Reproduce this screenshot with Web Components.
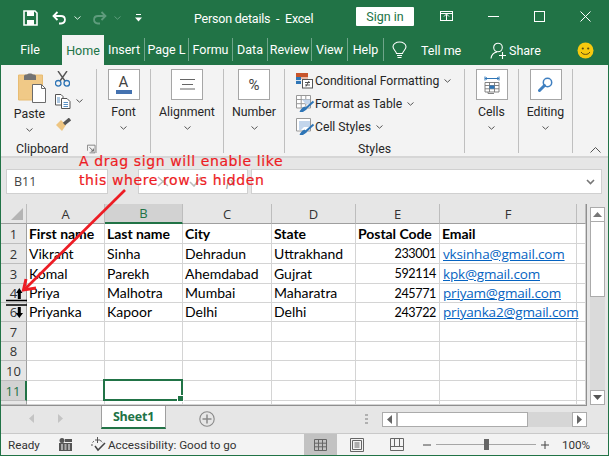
<!DOCTYPE html>
<html><head><meta charset="utf-8"><style>
html,body{margin:0;padding:0;background:#fff}
body{width:609px;height:456px;overflow:hidden;font-family:Roboto,"Open Sans",sans-serif}
</style></head><body>
<xl-window>
<xl-titlebar></xl-titlebar>
<xl-tabs></xl-tabs>
<xl-ribbon></xl-ribbon>
<xl-formula></xl-formula>
<xl-sheet></xl-sheet>
<xl-sheettabs></xl-sheettabs>
<xl-status></xl-status>
<xl-note>A drag sign will enable like<br>this where row is hidden</xl-note>
</xl-window>
<script>
function def(name,css,html){
  customElements.define(name,class extends HTMLElement{
    constructor(){super();const r=this.attachShadow({mode:'open'});
      r.innerHTML='<style>'+css+'</style>'+(typeof html==='function'?html(this):html);}
  });
}
const chev=(c='#555')=>`<svg width="7" height="4" viewBox="0 0 7 4" style="display:block"><path d="M.5.5 3.5 3.2 6.5.5" fill="none" stroke="${c}" stroke-width="1"/></svg>`;
def('xl-window',`:host{display:flex;flex-direction:column;position:relative;width:609px;height:456px;box-sizing:border-box;border-left:1px solid #217346;border-right:1px solid #217346;border-bottom:1px solid #217346;background:#e6e6e6;font-family:Roboto,"Open Sans",sans-serif;overflow:hidden}`,`<slot></slot>`);

def('xl-titlebar',`:host{display:flex;align-items:center;height:35px;margin:0 -1px;background:#217346;color:#fff;font-size:12.5px;position:relative;flex:none}
.qat{display:flex;align-items:center;width:194px;padding-left:23px;box-sizing:border-box;gap:0}
.title{width:162px;padding-top:1px;letter-spacing:-.22px;white-space:pre}
.sign{width:58px;height:19px;background:#fff;color:#217346;border-radius:1px;font-size:12.5px;display:flex;align-items:center;justify-content:center;margin-top:-2px}
.win{display:flex;align-items:center;margin-left:26px;margin-top:-3px}
svg{display:block;flex:none}`,
`<div class="qat">
<svg width="15" height="16" viewBox="0 0 15 16"><path d="M1 1H12L14 3V15H1Z" fill="none" stroke="#fff" stroke-width="1.6"/><rect x="4" y="1" width="7" height="5" fill="#fff"/><rect x="4" y="10" width="7" height="5" fill="#fff"/></svg>
<svg style="margin-left:14px" width="15" height="14" viewBox="0 0 15 14"><path d="M5.5 1 1.5 5 5.5 9" fill="none" stroke="#fff" stroke-width="1.8"/><path d="M2 5H9C14 5 14.500 12 9 12.500H7" fill="none" stroke="#fff" stroke-width="1.8"/></svg>
<span style="margin-left:7px">${chev('#dfeee6')}</span>
<svg style="margin-left:11px" width="15" height="14" viewBox="0 0 15 14"><path d="M9.500 1 13.500 5 9.500 9" fill="none" stroke="#5f9c7d" stroke-width="1.800"/><path d="M13 5H6C1 5 .5 12 6 12.500H8" fill="none" stroke="#5f9c7d" stroke-width="1.800"/></svg>
<span style="margin-left:7px">${chev('#5f9c7d')}</span>
<svg style="margin-left:14px" width="7" height="8" viewBox="0 0 7 8"><path d="M1 .5H6" stroke="#fff"/><path d="M0 3.500H7L3.500 7.500Z" fill="#fff"/></svg>
</div>
<div class="title">Person details  -  Excel</div>
<div class="sign">Sign in</div>
<div class="win">
<svg width="14" height="11" viewBox="0 0 14 11"><rect x=".5" y=".5" width="12" height="9" fill="none" stroke="#fff"/><path d="M6.500 9V3.500M4 5.500 6.500 3 9 5.500M.5 2.500H12.500" fill="none" stroke="#fff"/></svg>
<svg style="margin-left:34px" width="11" height="11" viewBox="0 0 11 11"><path d="M0 5.500H11" stroke="#fff"/></svg>
<svg style="margin-left:35px" width="11" height="11" viewBox="0 0 11 11"><rect x=".5" y=".5" width="10" height="10" fill="none" stroke="#fff"/></svg>
<svg style="margin-left:35px" width="11" height="11" viewBox="0 0 11 11"><path d="M.5.5 10.500 10.500M10.500.5 .5 10.500" stroke="#fff"/></svg>
</div>`);

def('xl-tabs',`:host{display:flex;align-items:center;height:30px;margin:0 -1px;background:#217346;color:#fff;font-size:12.5px;flex:none}
.t{height:23px;display:flex;align-items:center;justify-content:center;box-sizing:border-box;border-right:1px solid #6fa58a;overflow:hidden;white-space:nowrap;margin-top:-1px}
.f{width:62px;justify-content:center;border:0;padding-right:2px}
.h{width:42px;height:30px;background:#f3f3f3;color:#217346;border:0;margin-top:0}
.end{display:flex;align-items:center}
.end span{display:block;white-space:nowrap}
svg{display:block;flex:none}`,
`<div class="t f">File</div><div class="t h">Home</div>
<div class="t" style="width:41px">Insert</div><div class="t" style="width:44px">Page L</div><div class="t" style="width:44px">Formu</div><div class="t" style="width:35px">Data</div><div class="t" style="width:44px">Review</div><div class="t" style="width:36px">View</div><div class="t" style="width:36px">Help</div>
<div class="end">
<svg style="margin-left:8px" width="15" height="18" viewBox="0 0 15 18"><path d="M4.500 12.500C4 10 1 8.500 1 5.800 1 3 4 1 7.500 1S14 3 14 5.800C14 8.500 11 10 10.500 12.500Z" fill="none" stroke="#fff" stroke-width="1.100"/><path d="M5 14.500H10M5.500 16.500H9.500" stroke="#fff"/></svg>
<span style="margin-left:14px;width:38px">Tell me</span>
<svg style="margin-left:31px" width="17" height="17" viewBox="0 0 17 17"><circle cx="8" cy="5.500" r="4.300" fill="none" stroke="#fff" stroke-width="1.100"/><path d="M1 16.500C1.500 12.500 4 10.500 7 10" fill="none" stroke="#fff" stroke-width="1.100"/><path d="M9 13.500H16M12.500 10V17" stroke="#fff" stroke-width="1.100"/></svg>
<span style="margin-left:2px;width:29px">Share</span>
<svg style="margin-left:39px" width="17" height="17" viewBox="0 0 17 17"><circle cx="8.500" cy="8.500" r="8" fill="#f6c90e"/><circle cx="5.800" cy="6.500" r="1.100" fill="#5b4a10"/><circle cx="11.200" cy="6.500" r="1.100" fill="#5b4a10"/><path d="M4.200 10C5.200 13.200 11.800 13.200 12.800 10" fill="none" stroke="#5b4a10" stroke-width="1"/></svg>
</div>`);

def('xl-btn',`:host{display:flex;flex-direction:column;align-items:center;box-sizing:border-box;height:84px;border-right:1px solid #bfbfbf;margin-top:4px;color:#262626;font-size:12.3px;flex:none}
.b{width:32px;height:31px;box-sizing:border-box;border:1px solid #a6a6a6;background:#fff;display:flex;align-items:center;justify-content:center;flex:none}
.l{margin-top:4px;line-height:16px;height:16px}
.c{margin-top:6px}`,el=>`<div class="b"><slot></slot></div><div class="l">${el.getAttribute('label')}</div><div class="c">${chev()}</div>`);

def('xl-style-row',`:host{display:flex;align-items:center;height:23px;font-size:12.2px;color:#262626;white-space:nowrap}
.i{width:18px;height:17px;flex:none;margin-right:1px}
.c{margin-left:5px}`,el=>`<div class="i"><slot></slot></div><span>${el.getAttribute('text')}</span><span class="c">${chev()}</span>`);

const brush=`<path d="M17.500 6.500 8 15" stroke="#2e75b6" stroke-width="2"/><path d="M8.500 11.500 11 14 7 17H3.500C4 15 6 12.500 8.500 11.500Z" fill="#2e75b6"/>`;
def('xl-ribbon',`:host{display:flex;height:93px;box-sizing:border-box;background:#f3f3f3;border-bottom:2px solid #d6d6d6;flex:none;font-family:Roboto,"Open Sans",sans-serif}
svg{display:block}
.clip{width:96px;height:84px;margin-top:4px;border-right:1px solid #bfbfbf;box-sizing:border-box;flex:none;display:grid;grid-template-columns:53px 1fr;grid-template-rows:71px 13px;color:#262626;font-size:12.3px}
.p{display:flex;flex-direction:column;align-items:center;padding-left:4px;box-sizing:border-box}
.p span{line-height:16px}
.s{display:flex;flex-direction:column;padding-left:1px}
.s div{display:flex;align-items:center;height:24px;flex:none}
.s div:first-child{height:20px}
.cl{grid-column:1/3;display:flex;align-items:center;height:18px;padding-left:15px}
.cl svg{margin-left:19px}
.st{width:180px;height:84px;margin-top:4px;border-right:1px solid #bfbfbf;box-sizing:border-box;padding-left:11px;flex:none;display:flex;flex-direction:column}
.st .cap{font-size:12.3px;color:#262626;text-align:center;margin-top:2px;height:18px;line-height:18px;padding-right:11px;flex:none}
.col{flex:1;display:flex;align-items:flex-end;justify-content:flex-end;padding:0 7px 3px 0}
.fa{display:flex;flex-direction:column;align-items:center;width:16px;color:#444;font-size:15px;line-height:14px}
.fa i{display:block;width:16px;height:4px;background:#4472b0;margin-top:1px}`,
`<div class="clip">
 <div class="p"><svg width="28" height="30" viewBox="0 0 28 30" style="margin:4px 0 0 4px"><path d="M.5 2H24.500V27H.5Z" fill="#f0c987" stroke="#e8bc73"/><path d="M6 3C6 1.500 8 1.500 9 1.500 9.500 0 14.500 0 15 1.500 16 1.500 18 1.500 18 3V7H6Z" fill="#737373"/><path d="M14.500 11.500H23.500L27.500 15.500V29.500H14.500Z" fill="#fff" stroke="#6b6b6b"/><path d="M23.500 11.500V15.500H27.500" fill="none" stroke="#6b6b6b"/></svg><span style="margin-top:3px">Paste</span><span style="margin-top:6px">${chev()}</span></div>
 <div class="s">
  <div><svg width="15" height="16" viewBox="0 0 15 16"><path d="M3 0 10 10M12 0 5 10" stroke="#555" stroke-width="1.400"/><circle cx="3.200" cy="12.300" r="2.800" fill="none" stroke="#2e75b6" stroke-width="1.300"/><circle cx="11.800" cy="12.300" r="2.800" fill="none" stroke="#2e75b6" stroke-width="1.300"/></svg></div>
  <div><svg width="16" height="15" viewBox="0 0 16 15"><path d="M.5.5H6L8 2.500V11H.5Z" fill="#fff" stroke="#555"/><path d="M6.500 4.500H12L15 7.500V14.500H6.500Z" fill="#fff" stroke="#555"/><path d="M8.500 8.500H13M8.500 10.500H13M8.500 12.500H13M2 4H5M2 6H5M2 8H5" stroke="#2e75b6" stroke-width=".8"/></svg><span style="margin-left:5px">${chev()}</span></div>
  <div><svg width="16" height="15" viewBox="0 0 16 15"><path d="M1 7 6 2 11 7 7 13Z" fill="#eec581"/><path d="M9 6 15 1" stroke="#555" stroke-width="3.500"/></svg></div>
 </div>
 <div class="cl">Clipboard<svg width="10" height="10" viewBox="0 0 10 10"><path d="M.5 7V.5H9.500V9.500H3" fill="none" stroke="#777"/><path d="M3 3 7.500 7.500M7.500 4.500V7.500H4.500" fill="none" stroke="#555"/></svg></div>
</div>
<xl-btn label="Font" style="width:54px"><div class="fa">A<i></i></div></xl-btn>
<xl-btn label="Alignment" style="width:73px"><svg width="15" height="11" viewBox="0 0 15 11"><path d="M0 .5H15M2 5.500H13M0 10H15" stroke="#666"/></svg></xl-btn>
<xl-btn label="Number" style="width:61px"><span style="font-size:15px;color:#444">%</span></xl-btn>
<div class="st"><div>
<xl-style-row text="Conditional Formatting"><svg width="18" height="17" viewBox="0 0 18 17"><path d="M0 1H12V5H0Z" fill="#c8552b"/><path d="M0 5H5V12H0Z" fill="#2e75b6"/><path d="M0 8.500H5" stroke="#fff" stroke-width=".8"/><path d="M5 5H12V7H5Z" fill="#e8b9a5"/><rect x="6.500" y="7.500" width="10" height="8.500" fill="#fff" stroke="#555"/><path d="M9 10.500H14M9 13H14M13 9 10 14.500" stroke="#444" stroke-width=".9" fill="none"/></svg></xl-style-row>
<xl-style-row text="Format as Table"><svg width="18" height="17" viewBox="0 0 18 17" overflow="visible"><path d="M.5.5H14.500V13H.5ZM5.200.5V13M9.800.5V13M.5 4.500H14.500M.5 8.700H14.500" fill="#fff" stroke="#999"/><path d="M6 4.500H14V9L9.500 9Z" fill="#c3d6ec"/>${brush}</svg></xl-style-row>
<xl-style-row text="Cell Styles"><svg width="18" height="17" viewBox="0 0 18 17" overflow="visible"><path d="M.5.5H14.500V13H.5Z" fill="#fff" stroke="#999"/><path d="M3 3H14V9H8L5 12H3Z" fill="#c3d6ec"/>${brush}</svg></xl-style-row>
</div><div class="cap">Styles</div></div>
<xl-btn label="Cells" style="width:54px"><svg width="16" height="18" viewBox="0 0 16 18"><path d="M1 2.500H15M1 .5V4.500M15 .5V4.500" stroke="#2e75b6" stroke-width="1"/><path d="M3 1.500 1.500 2.500 3 3.500M13 1.500 14.500 2.500 13 3.500" fill="none" stroke="#2e75b6"/><path d="M1 6.500H15V16H1ZM1 9.500H15M1 12.800H15M5.500 6.500V16M10.500 6.500V16" fill="#fff" stroke="#777" stroke-width=".9"/><rect x="5.500" y="9.500" width="5" height="3.300" fill="#2e75b6"/><path d="M4 16V17.500H10" fill="none" stroke="#777" stroke-width=".9"/></svg></xl-btn>
<xl-btn label="Editing" style="width:54px"><svg width="15" height="16" viewBox="0 0 15 16"><circle cx="9.500" cy="5.500" r="4.200" fill="none" stroke="#3f7fc0" stroke-width="1.500"/><path d="M6.500 8.500 1.500 13.500" stroke="#3f7fc0" stroke-width="3" stroke-linecap="round"/></svg></xl-btn>
<div class="col"><svg width="11" height="6" viewBox="0 0 11 6"><path d="M.5 5.500 5.500.5 10.500 5.500" fill="none" stroke="#555"/></svg></div>`);

def('xl-formula',`:host{display:flex;align-items:flex-start;height:46px;padding:11px 6px 0 5px;box-sizing:border-box;background:#e6e6e6;flex:none;font-family:"Open Sans",Roboto,sans-serif}
.box{height:25px;box-sizing:border-box;background:#fff;border:1px solid #d0d0d0;display:flex;align-items:center;flex:none}
.n{width:102px;padding-left:7px;font-size:12.500px;color:#444}
.fx{width:110px;margin-left:30px;padding-left:18px;color:#9c9c9c}
.f{flex:1;margin-left:3px;justify-content:flex-end;padding-right:6px}
svg{display:block;flex:none}`,
`<div class="box n">B11</div>
<div class="box fx"><svg width="12" height="11" viewBox="0 0 12 11"><path d="M1 1 11 10M11 1 1 10" stroke="#bdbdbd" stroke-width="1.500"/></svg><svg style="margin-left:20px" width="13" height="11" viewBox="0 0 13 11"><path d="M1 6 5 10 12 1" fill="none" stroke="#bdbdbd" stroke-width="1.600"/></svg><span style="font:italic 13px 'Liberation Serif',serif;margin-left:24px">fx</span></div>
<div class="box f"><svg width="9" height="6" viewBox="0 0 9 6"><path d="M1 1 4.500 4.500 8 1" fill="none" stroke="#777" stroke-width="1.600"/></svg></div>`);

const rows=[[1,20,'First name','Last name','City','State','Postal Code','Email'],
[2,20,'Vikrant','Sinha','Dehradun','Uttrakhand','233001','vksinha@gmail.com'],
[3,20,'Komal','Parekh','Ahemdabad','Gujrat','592114','kpk@gmail.com'],
[4,19,'Priya','Malhotra','Mumbai','Maharatra','245771','priyam@gmail.com'],
[6,19,'Priyanka','Kapoor','Delhi','Delhi','243722','priyanka2@gmail.com'],
[7,20],[8,19],[10,20],[11,20],['',4]];
def('xl-sheet',`:host{display:flex;height:202px;flex:none;background:#e6e6e6;position:relative}
.g{display:grid;width:586px;box-sizing:border-box;grid-template-columns:26px 78px 78px 89px 84px 84px 137px 9px;grid-template-rows:20px ${rows.map(r=>r[1]+'px').join(' ')};border-right:1px solid #8f8f8f;border-bottom:1px solid #8f8f8f;font:14px/1 Lato,sans-serif;color:#000;background:#fff;position:relative;overflow:hidden}
.ch{background:#e6e6e6;border-right:1px solid #bdbdbd;border-bottom:1px solid #9f9f9f;box-sizing:border-box;display:flex;align-items:center;justify-content:center;font:13px "Open Sans",sans-serif;color:#333}
.ch.sel{background:#d2d2d2;color:#217346;border-bottom:2px solid #217346}
.rh{background:#e6e6e6;border-right:1px solid #9f9f9f;border-bottom:1px solid #bdbdbd;box-sizing:border-box;display:flex;align-items:center;justify-content:center;font:13px "Open Sans",sans-serif;color:#333}
.rh.sel{background:#d2d2d2;color:#217346;border-right:2px solid #217346}
.c{border-right:1px solid #d4d4d4;border-bottom:1px solid #d4d4d4;box-sizing:border-box;display:flex;align-items:center;padding:0 2px 0 2px;white-space:nowrap;overflow:visible;position:relative}
.b{font-weight:700;letter-spacing:-.05px}
.r{justify-content:flex-end;font-size:12.6px;letter-spacing:-.4px;padding:2px 3px 0 2px}
a{color:#0563c1;text-decoration:underline;font:13.500px "Open Sans",sans-serif;letter-spacing:-.18px;margin-left:1px}
.active{z-index:2}
.active::after{content:"";position:absolute;inset:-2px -1px -1px -2px;border:2px solid #217346}
.active i{position:absolute;right:-2px;bottom:-2px;width:5px;height:5px;background:#217346;border:1px solid #fff;z-index:1}
.corner{background:#e6e6e6;border-right:1px solid #bdbdbd;border-bottom:1px solid #9f9f9f;box-sizing:border-box;position:relative}
.corner svg{position:absolute;right:3px;bottom:3px}
.v{width:21px;flex:none;padding:3px 0 1px 3px;box-sizing:border-box;display:flex;flex-direction:column}
.sb{width:15px;height:15px;box-sizing:border-box;background:#fff;border:1px solid #ababab;display:flex;align-items:center;justify-content:center;flex:none}
.th{width:15px;height:75px;box-sizing:border-box;background:#fff;border:1px solid #ababab;border-top:0;flex:none}
.tr{width:15px;flex:1;background:#dadada}
svg{display:block}
.sign{position:absolute;left:4px;top:81px;width:22px;height:36px;z-index:3}`,
()=>{
 let h='<div class="g"><div class="corner"><svg width="12" height="12" viewBox="0 0 12 12"><path d="M12 0V12H0Z" fill="#b4b4b4"/></svg></div>';
 ['A','B','C','D','E','F',''].forEach(c=>h+=`<div class="ch${c==='B'?' sel':''}">${c}</div>`);
 rows.forEach((r,i)=>{
  h+=`<div class="rh${r[0]===11?' sel':''}">${r[0]}</div>`;
  for(let k=0;k<7;k++){
   const v=r[k+2]||'';let cls='c',inner=v;
   if(i===0&&v)cls+=' b';
   if(k===4&&i>0&&v)cls+=' r';
   if(k===5&&i>0&&v)inner=`<a>${v}</a>`;
   if(r[0]===11&&k===1){cls+=' active';inner='<i></i>';}
   h+=`<div class="${cls}">${inner}</div>`;
  }
 });
 h+=`<svg class="sign" viewBox="0 0 22 36"><path d="M1 15.500H22M1 20H22" stroke="#000" stroke-width="1.300"/><path d="M14.300 3 17.500 8H15.800V14H12.800V8H11Z" fill="#000"/><path d="M12.800 22H15.800V28H18L14.300 33 10.800 28H12.800Z" fill="#000"/></svg></div>`;
 h+=`<div class="v"><div class="sb"><svg width="9" height="5" viewBox="0 0 9 5"><path d="M4.500 0 9 5H0Z" fill="#777"/></svg></div><div class="th"></div><div class="tr"></div><div class="sb"><svg width="9" height="5" viewBox="0 0 9 5"><path d="M0 0H9L4.500 5Z" fill="#555"/></svg></div></div>`;
 return h;
});

def('xl-sheettabs',`:host{display:flex;align-items:flex-start;height:27px;flex:none;background:#e6e6e6;position:relative;box-sizing:border-box}
svg{display:block;flex:none}
.nav{width:100px;display:flex;gap:24px;padding:8px 0 0 28px;box-sizing:border-box;flex:none}
.tab{width:65px;height:23px;background:#fff;border-left:1px solid #9f9f9f;border-right:1px solid #9f9f9f;border-bottom:2px solid #217346;box-sizing:border-box;display:flex;align-items:center;justify-content:center;font:700 12.500px "Open Sans",sans-serif;color:#217346;flex:none;letter-spacing:-.2px}
.add{margin-left:33px;margin-top:5px}
.dots{margin-left:150px;margin-top:8px;flex:none}
.h{display:flex;margin:6px 0 0 14px;width:205px;height:15px;background:#d6d6d6;flex:none}
.sb{width:15px;height:15px;box-sizing:border-box;background:#fff;border:1px solid #ababab;display:flex;align-items:center;justify-content:center;flex:none}
.th{width:131px;height:15px;box-sizing:border-box;background:#fff;border:1px solid #ababab;flex:none}
.tr{flex:1}`,
`<div class="nav"><svg width="5" height="9" viewBox="0 0 5 9"><path d="M5 0V9L0 4.500Z" fill="#c4c4c4"/></svg><svg width="5" height="9" viewBox="0 0 5 9"><path d="M0 0V9L5 4.500Z" fill="#c4c4c4"/></svg></div>
<div class="tab">Sheet1</div>
<svg class="add" width="16" height="16" viewBox="0 0 16 16"><circle cx="8" cy="8" r="7.200" fill="none" stroke="#8a8a8a" stroke-width="1.100"/><path d="M8 3.500V12.500M3.500 8H12.500" stroke="#8a8a8a" stroke-width="1.500"/></svg>
<svg class="dots" width="3" height="11" viewBox="0 0 3 11"><path d="M0 0H3V2H0ZM0 4H3V6H0ZM0 8H3V10H0Z" fill="#b0b0b0"/></svg>
<div class="h"><div class="sb"><svg width="5" height="9" viewBox="0 0 5 9"><path d="M5 0V9L0 4.500Z" fill="#666"/></svg></div><div class="th"></div><div class="tr"></div><div class="sb"><svg width="5" height="9" viewBox="0 0 5 9"><path d="M0 0V9L5 4.500Z" fill="#666"/></svg></div></div>`);

def('xl-status',`:host{display:flex;align-items:center;height:22px;flex:none;background:#f3f3f3;border-top:1px solid #c9c9c9;box-sizing:border-box;font-size:11.7px;color:#333;position:relative}
svg{display:block;flex:none}
.v{background:#c2c2c2;width:33px;height:21px;display:flex;align-items:center;justify-content:center;flex:none}
.fl{display:flex;align-items:center;padding-left:7px;width:303px;flex:none;box-sizing:border-box;height:21px}`,
`<div class="fl"><span style="width:32px">Ready</span>
<svg style="margin-left:19px" width="13" height="13" viewBox="0 0 13 13"><circle cx="3" cy="2.500" r="2.500" fill="#555"/><rect x="0" y="5" width="13" height="8" fill="#555"/><path d="M2 7H4M5.500 7H7.500M9 7H11M2 9H4M5.500 9H7.500M9 9H11M2 11H4M5.500 11H7.500M9 11H11" stroke="#fff"/><path d="M6 1H13V4H6Z" fill="#555"/></svg>
<svg style="margin-left:18px" width="16" height="15" viewBox="0 0 16 15"><path d="M2 9A5 5 0 0 1 5 3.500M10 3.500A5 5 0 0 1 13 6" fill="none" stroke="#555" stroke-dasharray="2 1.500"/><path d="M7.500 0V6M5 3H10" stroke="#555"/><path d="M5 8 8 12 15 5" fill="none" stroke="#444" stroke-width="1.500" transform="translate(0 1)"/></svg>
<span style="margin-left:2px;white-space:nowrap">Accessibility: Good to go</span></div>
<div class="v"><svg width="13" height="12" viewBox="0 0 13 12"><path d="M.5.5H12.500V11.500H.5ZM4.500.5V11.500M8.500.5V11.500M.5 4.200H12.500M.5 7.800H12.500" fill="none" stroke="#666"/></svg></div>
<svg style="margin-left:13px" width="14" height="14" viewBox="0 0 14 14"><path d="M.5.5H13.500V13.500H.5Z" fill="none" stroke="#666"/><path d="M2.500 2.500H11.500V11.500H2.500Z" fill="none" stroke="#666"/><path d="M4.500 5H9.500M4.500 7H9.500M4.500 9H9.500" stroke="#666"/></svg>
<svg style="margin-left:26px" width="14" height="13" viewBox="0 0 14 13"><path d="M.5.5H13.500V12.500H.5ZM.5 8.500H13.500M4.500.5V8.500M9.500.5V8.500" fill="none" stroke="#666"/></svg>
<svg style="margin-left:19px" width="8" height="8" viewBox="0 0 8 8"><path d="M0 4H8" stroke="#444"/></svg>
<div style="margin-left:5px;width:100px;height:13px;position:relative;flex:none;display:flex;align-items:center"><div style="width:100%;height:1px;background:#a6a6a6"></div><div style="position:absolute;left:48px;top:1px;width:5px;height:11px;background:#666"></div></div>
<svg style="margin-left:5px" width="8" height="8" viewBox="0 0 8 8"><path d="M0 4H8M4 0V8" stroke="#444"/></svg>
<span style="margin-left:13px;letter-spacing:-.1px">100%</span>`);

def('xl-note',`:host{position:absolute;left:78px;top:152px;z-index:5;font:14px/19px "DejaVu Sans",sans-serif;color:#ed1c24;white-space:nowrap;letter-spacing:.6px;-webkit-text-stroke:.2px #ed1c24}
svg{position:absolute;left:-78px;top:-152px;width:609px;height:456px;pointer-events:none;overflow:visible}`,
`<slot></slot><svg viewBox="0 0 609 456"><path d="M124 190 24 289" stroke="#ed1c24" stroke-width="2.700" fill="none"/><path d="M25 279 22.500 290 35 288" stroke="#ed1c24" stroke-width="3" fill="none"/></svg>`);
</script>
</body></html>
